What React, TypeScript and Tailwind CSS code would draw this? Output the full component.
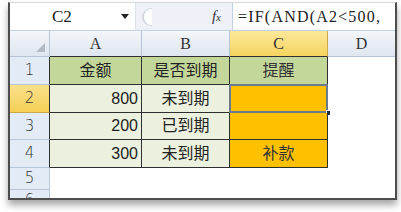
import React from 'react';

const cjk = "font-['Liberation_Sans','Noto_Sans_CJK_SC',sans-serif]";
const serif = "font-['Liberation_Serif','Noto_Sans_CJK_SC',serif]";

const rows = [
  { n: '1', a: '金额', b: '是否到期', c: '提醒', head: true },
  { n: '2', a: '800', b: '未到期', c: '' },
  { n: '3', a: '200', b: '已到期', c: '' },
  { n: '4', a: '300', b: '未到期', c: '补款' },
];

function ColHead({ label, active }: { label: string; active?: boolean }) {
  return (
    <div
      className={`flex items-center justify-center border-r border-b text-[16px] text-[#333] ${serif} ${
        active
          ? 'bg-gradient-to-b from-[#fbe89a] to-[#f6d45e] border-r-[#c9a94a] border-b-[#2f2f2f]'
          : 'bg-gradient-to-b from-[#f3f6fa] to-[#dfe6ef] border-r-[#b6c4d6] border-b-[#2f2f2f]'
      }`}
    >
      {label}
    </div>
  );
}

function RowHead({ n, active, dark }: { n: string; active?: boolean; dark?: boolean }) {
  return (
    <div
      className={`flex items-center justify-center border-r border-b text-[15px] text-[#333] font-['DejaVu_Sans',sans-serif] font-light ${
        active ? 'bg-gradient-to-b from-[#fbe08a] to-[#f5cf55] border-b-[#c9a94a]' : 'bg-[#e3ebf6] border-b-[#b8c7da]'
      } ${dark ? 'border-r-[#2f2f2f]' : 'border-r-[#b8c7da]'}`}
    >
      {n}
    </div>
  );
}

export default function App() {
  return (
    <div className="w-[401px] h-[212px] bg-white pt-[2px] pl-[8px]">
      <div className="w-[389px] h-[198px] flex flex-col overflow-hidden border-t border-t-[#d8d8d8] border-x-2 border-b-2 border-[#4d4d4d] bg-white shadow-[0_5px_7px_rgba(0,0,0,0.35)]">
        {/* formula bar */}
        <div className="h-[28px] flex border-b border-[#c5d0de] shrink-0">
          <div className="w-[125px] flex items-center relative">
            <span className={`ml-[42px] text-[17px] text-[#222] ${serif}`}>C2</span>
            <span className="absolute left-[111px] top-[11px] w-0 h-0 border-l-[4px] border-r-[4px] border-t-[5px] border-l-transparent border-r-transparent border-t-[#222]" />
          </div>
          <div className="w-[97px] flex items-center bg-[#eef2f8] border-l border-[#dde3ea] relative">
            <span className="absolute left-[6px] top-[5px] w-[10px] h-[18px] rounded-l-full border-l-2 border-y border-[#d0d6de] bg-white" />
            <span className="ml-auto mr-[11px] italic font-['Liberation_Serif',serif] text-[15px] text-[#333]">
              f<span className="text-[11px]">x</span>
            </span>
          </div>
          <div className={`flex-1 flex items-center border-l border-[#c5d0de] pl-[5px] text-[16px] tracking-[1.2px] text-[#222] whitespace-nowrap ${serif}`}>
            =IF(AND(A2&lt;500,
          </div>
        </div>

        {/* sheet */}
        <div className="flex-1 grid grid-cols-[40px_92px_88px_98px_1fr] grid-rows-[26px_28px_28px_27px_28px_22px_1fr]">
          <div className="bg-gradient-to-b from-[#f3f6fa] to-[#dfe6ef] border-r border-b border-[#b6c4d6] relative">
            <span className="absolute right-[4px] bottom-[4px] w-0 h-0 border-l-[9px] border-l-transparent border-b-[9px] border-b-[#b3bac4]" />
          </div>
          <ColHead label="A" />
          <ColHead label="B" />
          <ColHead label="C" active />
          <div className={`flex items-center justify-center bg-gradient-to-b from-[#f3f6fa] to-[#dfe6ef] border-b border-[#b6c4d6] text-[16px] text-[#333] ${serif}`}>
            D
          </div>

          {rows.map((r) => (
            <React.Fragment key={r.n}>
              <RowHead n={r.n} active={r.n === '2'} dark />
              <div
                className={`flex items-center border-r border-b border-[#2f2f2f] text-[#222] ${cjk} ${
                  r.head ? 'justify-center bg-[#c4d79b] text-[16px]' : 'justify-end pr-[3px] bg-[#ebf1de] text-[16px]'
                }`}
              >
                {r.a}
              </div>
              <div
                className={`flex items-center justify-center border-r border-b border-[#2f2f2f] text-[16px] text-[#222] ${cjk} ${
                  r.head ? 'bg-[#c4d79b]' : 'bg-[#ebf1de]'
                }`}
              >
                {r.b}
              </div>
              <div
                className={`relative flex items-center justify-center border-r border-b border-[#2f2f2f] text-[16px] text-[#333] ${cjk} ${
                  r.head ? 'bg-[#c4d79b]' : 'bg-[#ffc000]'
                }`}
              >
                {r.c}
                {r.n === '2' && (
                  <>
                    <span className="absolute left-[-1px] top-[-1px] right-[-1px] bottom-[-1px] border-2 border-[#6b7a8c]" />
                    <span className="absolute right-[-4px] bottom-[-4px] w-[5px] h-[6px] bg-[#1f2a44] border border-white" />
                  </>
                )}
              </div>
              <div className="bg-white" />
            </React.Fragment>
          ))}

          <RowHead n="5" />
          <div className="col-span-4 bg-white" />
          <div className="relative bg-[#e3ebf6] border-r border-[#b8c7da] overflow-hidden">
            <span className="absolute left-0 right-0 top-[3px] text-center text-[15px] leading-none text-[#333] font-['DejaVu_Sans',sans-serif] font-light">
              6
            </span>
          </div>
          <div className="col-span-4 bg-white" />
        </div>
      </div>
    </div>
  );
}
